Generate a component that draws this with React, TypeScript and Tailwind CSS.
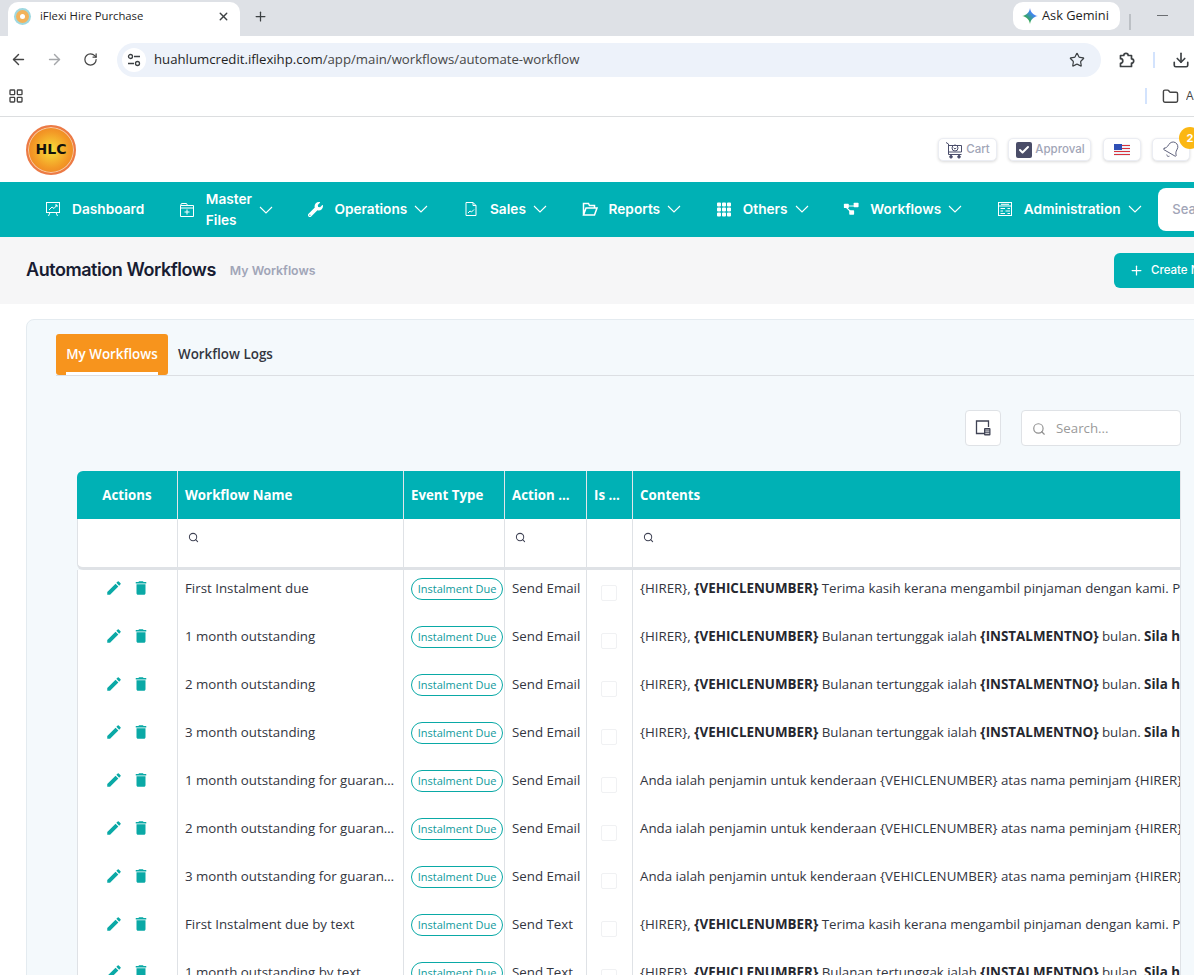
import { ArrowLeft, ArrowRight, Bell, Check, Download, Folder, LayoutGrid, Plus, RotateCw, Search, Star, X } from "lucide-react";
import { BsGrid3X3GapFill } from "react-icons/bs";
import { FaWrench } from "react-icons/fa";
import { MdDelete, MdEdit } from "react-icons/md";

const tableFont = "font-['Open_Sans','Noto_Sans',sans-serif]";

function DashboardIcon() {
  return (
    <svg width="16" height="16" viewBox="0 0 16 16" fill="none" stroke="currentColor" strokeWidth="1">
      <rect x="1.5" y="1.5" width="13" height="10" />
      <path d="M4 9l3-3 2 1.500 3-3.500M10 4h2v2M5 11.500l-1.500 3.500M11 11.500l1.500 3.500" />
    </svg>
  );
}

function MasterIcon() {
  return (
    <svg width="16" height="16" viewBox="0 0 16 16" fill="none" stroke="currentColor" strokeWidth="1">
      <path d="M1.500 3.500h13v11h-13zM1.500 3.500l1-2h5l1 2M1.500 6h13M8 7.500v5M5.500 10H10.500" />
    </svg>
  );
}

function SalesIcon() {
  return (
    <svg width="16" height="16" viewBox="0 0 16 16" fill="none" stroke="currentColor" strokeWidth="1">
      <path d="M3 1.500h7l3 3v10H3zM10 1.500v3h3M5 12l2-2 1.500 1L11 8.500" />
    </svg>
  );
}

function ReportsIcon() {
  return (
    <svg width="16" height="16" viewBox="0 0 16 16" fill="none" stroke="currentColor" strokeWidth="1.500">
      <path d="M1.500 14V2.500h5l1 2h5V7M1.500 14l2.500-7h11l-2.500 7z" />
    </svg>
  );
}

function WorkflowIcon() {
  return (
    <svg width="18" height="16" viewBox="0 0 18 16" fill="currentColor">
      <rect x="1" y="2" width="5.500" height="5" rx="0.800" />
      <rect x="12" y="1" width="5.500" height="5" rx="0.800" />
      <rect x="7" y="9.500" width="5.500" height="5" rx="0.800" />
      <path d="M5 4h8v1.200H5zM4.500 6l4 4-1 .8-4-4z" />
    </svg>
  );
}

function AdminIcon() {
  return (
    <svg width="16" height="16" viewBox="0 0 16 16" fill="none" stroke="currentColor" strokeWidth="1">
      <rect x="1.500" y="1.500" width="13" height="13" />
      <path d="M1.500 5h13M4 3.300h8M3.500 7.500H8M10.500 7.500H13M3.500 10H6M8.500 10H13M3.500 12.500H8M10.500 12.500H13" />
    </svg>
  );
}

function Caret() {
  return (
    <svg width="14" height="8" viewBox="0 0 14 8" fill="none" stroke="currentColor" strokeWidth="1.100" className="ml-[7px] shrink-0">
      <path d="M1 1l6 6 6-6" />
    </svg>
  );
}

function GeminiIcon() {
  return (
    <svg width="16" height="16" viewBox="0 0 16 16">
      <defs>
        <linearGradient id="gem" x1="0" y1="1" x2="1" y2="0">
          <stop offset="0" stopColor="#f4b400" />
          <stop offset="0.300" stopColor="#34a853" />
          <stop offset="0.650" stopColor="#4285f4" />
          <stop offset="1" stopColor="#d96570" />
        </linearGradient>
      </defs>
      <path d="M8 0c.6 4.300 3.400 7.300 8 8-4.600.7-7.400 3.700-8 8-.6-4.300-3.400-7.300-8-8 4.600-.7 7.400-3.700 8-8z" fill="url(#gem)" />
    </svg>
  );
}

function TuneIcon() {
  return (
    <svg width="14" height="14" viewBox="0 0 14 14" fill="none" stroke="#3c4043" strokeWidth="1.300">
      <circle cx="3.500" cy="3.500" r="2" />
      <path d="M7 3.500h6M1 10.500h6" />
      <circle cx="10.500" cy="10.500" r="2" />
    </svg>
  );
}

function PuzzleIcon() {
  return (
    <svg width="18" height="18" viewBox="0 0 18 18" fill="none" stroke="#3c4043" strokeWidth="1.700" strokeLinejoin="round">
      <path d="M2.500 4.500h3.300a2.200 2.200 0 014.400 0h3.300v3.300a2.200 2.200 0 010 4.400v3.300H2.500v-3.200a2.300 2.300 0 000-4.600z" />
    </svg>
  );
}

function CartIcon() {
  return (
    <svg width="18" height="18" viewBox="0 0 18 18" fill="none" stroke="#4b4e6b" strokeWidth="1">
      <path d="M1 1.500l2.500 1.500v10.500h13M3.500 4.500h13v6.500h-13" />
      <circle cx="10" cy="7" r="3" />
      <path d="M8.700 6.800l1.300 1.300 1.300-1.300" />
      <circle cx="6" cy="15.800" r="1.300" fill="#4b4e6b" />
      <circle cx="14" cy="15.800" r="1.300" fill="#4b4e6b" />
    </svg>
  );
}

function FlagIcon() {
  return (
    <svg width="16" height="12" viewBox="0 0 16 12">
      <rect width="16" height="12" fill="#eef0f6" />
      <path d="M0 1.500h16M0 4.500h16M0 7.500h16M0 10.500h16" stroke="#d8323c" strokeWidth="1.200" />
      <rect width="8" height="6" fill="#2f4fb5" />
    </svg>
  );
}

function ColumnsIcon() {
  return (
    <svg width="16" height="16" viewBox="0 0 16 16" fill="none">
      <path d="M9 13.500H1.500V1H13.500V7" stroke="#3f4254" strokeWidth="1.300" />
      <rect x="9" y="8" width="6.500" height="7.500" rx="1" fill="#3f4254" />
      <path d="M10.300 10h4M10.300 11.800h4M10.300 13.600h4" stroke="#fff" strokeWidth="0.800" />
    </svg>
  );
}

const navItems = [
  { label: "Dashboard", icon: <DashboardIcon /> },
  { label: "Master Files", icon: <MasterIcon />, caret: true, wrap: true },
  { label: "Operations", icon: <FaWrench size={15} />, caret: true },
  { label: "Sales", icon: <SalesIcon />, caret: true },
  { label: "Reports", icon: <ReportsIcon />, caret: true },
  { label: "Others", icon: <BsGrid3X3GapFill size={17} />, caret: true },
  { label: "Workflows", icon: <WorkflowIcon />, caret: true },
  { label: "Administration", icon: <AdminIcon />, caret: true },
];

const boldText = "text-[13.400px] font-bold text-[#26282f]";

const thanks = (
  <>
    {"{HIRER}, "}<b className={boldText}>{"{VEHICLENUMBER}"}</b>{" Terima kasih kerana mengambil pinjaman dengan kami. Pembayaran ansuran anda akan bermula"}
  </>
);
const overdue = (
  <>
    {"{HIRER}, "}<b className={boldText}>{"{VEHICLENUMBER}"}</b>{" Bulanan tertunggak ialah "}<b className={boldText}>{"{INSTALMENTNO}"}</b>{" bulan. "}<b className={boldText}>Sila hubungi kami segera</b>
  </>
);
const guarantor = "Anda ialah penjamin untuk kenderaan {VEHICLENUMBER} atas nama peminjam {HIRER} yang mempunyai tunggakan";

const rows = [
  { name: "First Instalment due", action: "Send Email", body: thanks },
  { name: "1 month outstanding", action: "Send Email", body: overdue },
  { name: "2 month outstanding", action: "Send Email", body: overdue },
  { name: "3 month outstanding", action: "Send Email", body: overdue },
  { name: "1 month outstanding for guarantor", action: "Send Email", body: guarantor },
  { name: "2 month outstanding for guarantor", action: "Send Email", body: guarantor },
  { name: "3 month outstanding for guarantor", action: "Send Email", body: guarantor },
  { name: "First Instalment due by text", action: "Send Text", body: thanks },
  { name: "1 month outstanding by text", action: "Send Text", body: overdue },
];

function BrowserChrome() {
  return (
    <div className="font-['Open_Sans',sans-serif] text-[#1f1f1f]">
      <div className="flex h-[36px] items-end bg-[#dee1e6] pl-[8px]">
        <div className="flex h-[34px] w-[232px] items-center rounded-t-[10px] bg-white pb-[5px] pl-[8px]">
          <span className="flex h-[13px] w-[13px] items-center justify-center rounded-full bg-[#f2b35c] ring-2 ring-[#9fd8e0]">
            <span className="h-[5px] w-[5px] rounded-full bg-white" />
          </span>
          <span className="ml-[11px] flex-1 text-[11.300px]">iFlexi Hire Purchase</span>
          <X size={13} strokeWidth={2.5} className="mr-[10px] text-[#3c4043]" />
        </div>
        <Plus size={15} strokeWidth={2} className="mb-[12px] ml-[13px] text-[#3c4043]" />
        <div className="mb-[6px] ml-auto flex h-[28px] w-[107px] items-center gap-[4px] self-end rounded-[10px] bg-white pl-[9px] text-[12.800px] font-medium">
          <GeminiIcon />
          <span>Ask Gemini</span>
        </div>
        <div className="mb-[6px] ml-[9px] h-[16px] w-[2px] bg-[#bcc0c5]" />
        <div className="mb-[20px] ml-[26px] mr-[26px] h-px w-[11px] bg-[#6b6e72]" />
      </div>
      <div className="flex h-[47px] items-center bg-white pl-[10px]">
        <ArrowLeft size={17} className="text-[#444]" />
        <ArrowRight size={17} className="ml-[19px] text-[#a5a7aa]" />
        <RotateCw size={15} className="ml-[20px] text-[#444]" />
        <div className="ml-[19px] flex h-[34px] w-[984px] items-center rounded-full bg-[#edf2fa] pl-[5px]">
          <span className="flex h-[24px] w-[24px] items-center justify-center rounded-full bg-white">
            <TuneIcon />
          </span>
          <span className="ml-[8px] flex-1 text-[13.200px]">
            huahlumcredit.iflexihp.com<span className="text-[#474747]">/app/main/workflows/automate-workflow</span>
          </span>
          <Star size={16} strokeWidth={1.8} className="mr-[16px] text-[#3c4043]" />
        </div>
        <span className="ml-[17px]"><PuzzleIcon /></span>
        <div className="ml-[17px] h-[16px] w-[2px] bg-[#d3e3fd]" />
        <Download size={18} strokeWidth={2.2} className="ml-[17px] text-[#3c4043]" />
      </div>
      <div className="flex h-[34px] items-center border-b border-[#dcdee0] bg-white pb-[7px] pl-[8px]">
        <LayoutGrid size={16} className="text-[#444]" />
        <div className="ml-auto h-[16px] w-[2px] bg-[#d3e3fd]" />
        <Folder size={17} className="ml-[15px] text-[#444]" />
        <span className="ml-[7px] w-[8px] overflow-hidden text-[12px] text-[#444]">All</span>
      </div>
    </div>
  );
}

function AppHeader() {
  const chip = "flex h-[23px] items-center justify-center rounded-[5px] border border-[#ebedf3] bg-white shadow-[0_1px_3px_rgba(0,0,0,0.15)]";
  return (
    <div className="flex h-[65px] items-center bg-white pl-[26px] font-['Inter',sans-serif]">
      <div className="flex h-[50px] w-[50px] items-center justify-center rounded-full border-2 border-[#ec7a46] bg-[radial-gradient(circle,#f8df3a_0%,#f39a26_55%,#ec6f20_100%)] font-['DejaVu_Sans',sans-serif] text-[14px] font-bold text-[#15120c] shadow-[inset_0_0_0_1px_#f7c9a8]">
        HLC
      </div>
      <div className="ml-auto mr-[4px] flex gap-[11px] text-[11.500px] font-medium text-[#a1a5b7]">
        <div className={`${chip} w-[59px] gap-[3px]`}><CartIcon /><span>Cart</span></div>
        <div className={`${chip} w-[83px] gap-[3px] pl-[2px]`}>
          <span className="flex h-[16px] w-[16px] items-center justify-center rounded-[2px] bg-[#4a4d68]">
            <Check size={12} strokeWidth={4} className="text-white" />
          </span>
          <span>Approval</span>
        </div>
        <div className={`${chip} ml-[1px] w-[38px]`}><FlagIcon /></div>
        <div className={`${chip} relative w-[38px]`}>
          <Bell size={19} strokeWidth={1} className="rotate-[30deg] text-[#4b4e6b]" />
          <span className="absolute left-[26px] top-[-12px] flex h-[22px] w-[22px] items-center justify-center rounded-full bg-[#fbb713] text-[11px] font-bold text-white">2</span>
        </div>
      </div>
    </div>
  );
}

function NavBar() {
  return (
    <nav className="flex h-[55px] items-center gap-[34.600px] bg-[#00b1b5] pl-[45px] font-['Inter',sans-serif] text-[13.700px] font-semibold text-white">
      {navItems.map((item) => (
        <div key={item.label} className="flex shrink-0 items-center">
          <span className="flex w-[16px] shrink-0 justify-center">{item.icon}</span>
          <span className={item.wrap ? "ml-[11px] w-[46px] leading-[21px]" : "ml-[11px] whitespace-nowrap"}>{item.label}</span>
          {item.caret && <Caret />}
        </div>
      ))}
      <div className="ml-[-18px] flex h-[43px] w-[120px] shrink-0 items-center rounded-[8px] bg-white pl-[14px] text-[13px] font-medium text-[#a1a5b7]">
        Search
      </div>
    </nav>
  );
}

function TitleBar() {
  return (
    <div className="flex h-[67px] items-center bg-[#f6f6f7] pl-[26px] font-['Inter',sans-serif]">
      <h1 className="pb-[2px] text-[18px] font-semibold tracking-[-0.45px] text-[#181c32]">Automation Workflows</h1>
      <span className="ml-[14px] mt-[1px] text-[12.300px] font-semibold text-[#a1a5b7]">My Workflows</span>
      <button className="ml-auto mr-[-60px] flex h-[35px] w-[140px] shrink-0 items-center gap-[7px] rounded-[6px] bg-[#00b1b5] pl-[15px] text-[11.500px] font-medium text-white">
        <Plus size={15} strokeWidth={2} />
        <span className="whitespace-nowrap">Create New</span>
      </button>
    </div>
  );
}

function WorkflowTable() {
  const head = "h-[48px] border-r border-[#e2e6ea] px-[7px] pt-[1px] text-[13.300px] font-bold text-white";
  const filter = "h-[51px] border-r border-b-[3px] border-[#dfe2e6] bg-white px-[7px] align-top pt-[13px]";
  const cell = "h-[48px] overflow-hidden whitespace-nowrap border-r border-[#dfe2e6] px-[7px] pt-[8px] align-top text-[13.300px] leading-[20px] text-[#33363f]";
  return (
    <table className={`ml-[50px] w-[1104px] table-fixed border-separate border-spacing-0 ${tableFont}`}>
      <colgroup>
        <col className="w-[101px]" />
        <col className="w-[226px]" />
        <col className="w-[101px]" />
        <col className="w-[82px]" />
        <col className="w-[46px]" />
        <col />
      </colgroup>
      <thead>
        <tr>
          <th className={`${head} rounded-tl-[6px] bg-[#00b1b5] text-center`}>Actions</th>
          <th className={`${head} bg-[#00b1b5] text-left`}>Workflow Name</th>
          <th className={`${head} bg-[#00b1b5] text-left`}>Event Type</th>
          <th className={`${head} bg-[#00b1b5] text-left`}>Action ...</th>
          <th className={`${head} bg-[#00b1b5] text-left`}>Is ...</th>
          <th className={`${head} bg-[#00b1b5] text-left`}>Contents</th>
        </tr>
        <tr>
          <th className={`${filter} rounded-bl-[6px] border-l`} />
          <th className={filter}><Search size={11} strokeWidth={2.2} className="ml-[3px] text-[#3f4254]" /></th>
          <th className={filter} />
          <th className={filter}><Search size={11} strokeWidth={2.2} className="ml-[3px] text-[#3f4254]" /></th>
          <th className={filter} />
          <th className={filter}><Search size={11} strokeWidth={2.2} className="ml-[3px] text-[#3f4254]" /></th>
        </tr>
      </thead>
      <tbody>
        {rows.map((row, i) => (
          <tr key={i} className="bg-white">
            <td className={`${cell} border-l`}>
              <div className="flex items-center justify-center gap-[9px] pt-[1px] text-[#0aa9a6]">
                <MdEdit size={18} />
                <MdDelete size={18} />
              </div>
            </td>
            <td className={cell}>
              <div className="overflow-hidden text-ellipsis">{row.name}</div>
            </td>
            <td className={cell}>
              <div className="flex h-[22px] w-[92px] items-center justify-center rounded-full border border-[#0aa9a6] text-[11px] text-[#0f9a9c]">
                Instalment Due
              </div>
            </td>
            <td className={cell}>{row.action}</td>
            <td className={cell}>
              <div className="ml-[7px] mt-[7px] h-[16px] w-[16px] rounded-[2px] border border-[#f0f1f3] bg-white" />
            </td>
            <td className={`${cell} text-[13.100px]`}>{row.body}</td>
          </tr>
        ))}
      </tbody>
    </table>
  );
}

function WorkflowCard() {
  return (
    <div className="ml-[26px] mt-[15px] w-[1200px] rounded-l-[8px] border border-[#e4ebf0] bg-[#f4f9fc] pt-[14px]">
      <div className={`ml-[29px] flex h-[42px] items-stretch border-b border-[#dcdfe3] text-[13.400px] font-semibold ${tableFont}`}>
        <div className="relative flex w-[112px] items-center justify-center rounded-[3px] bg-[#f7941d] text-white">
          My Workflows
          <span className="absolute bottom-0 left-[10px] h-[3px] w-[92px] bg-white" />
        </div>
        <div className="flex items-center pl-[10px] text-[#33363f]">Workflow Logs</div>
      </div>
      <div className="flex items-center pl-[938px] pt-[34px]">
        <button className="flex h-[36px] w-[36px] items-center justify-center rounded-[4px] border border-[#dfe2e6] bg-white">
          <ColumnsIcon />
        </button>
        <div className={`ml-[20px] flex h-[36px] w-[160px] items-center rounded-[4px] border border-[#dfe2e6] bg-white pl-[10px] pt-[1px] text-[13.300px] text-[#9a9a9a] ${tableFont}`}>
          <Search size={14} className="text-[#8f8f8f]" />
          <span className="ml-[10px]">Search...</span>
        </div>
      </div>
      <div className="pt-[25px]">
        <WorkflowTable />
      </div>
    </div>
  );
}

export default function App() {
  return (
    <div className="h-[975px] w-[1194px] overflow-hidden bg-white">
      <BrowserChrome />
      <AppHeader />
      <NavBar />
      <TitleBar />
      <WorkflowCard />
    </div>
  );
}
